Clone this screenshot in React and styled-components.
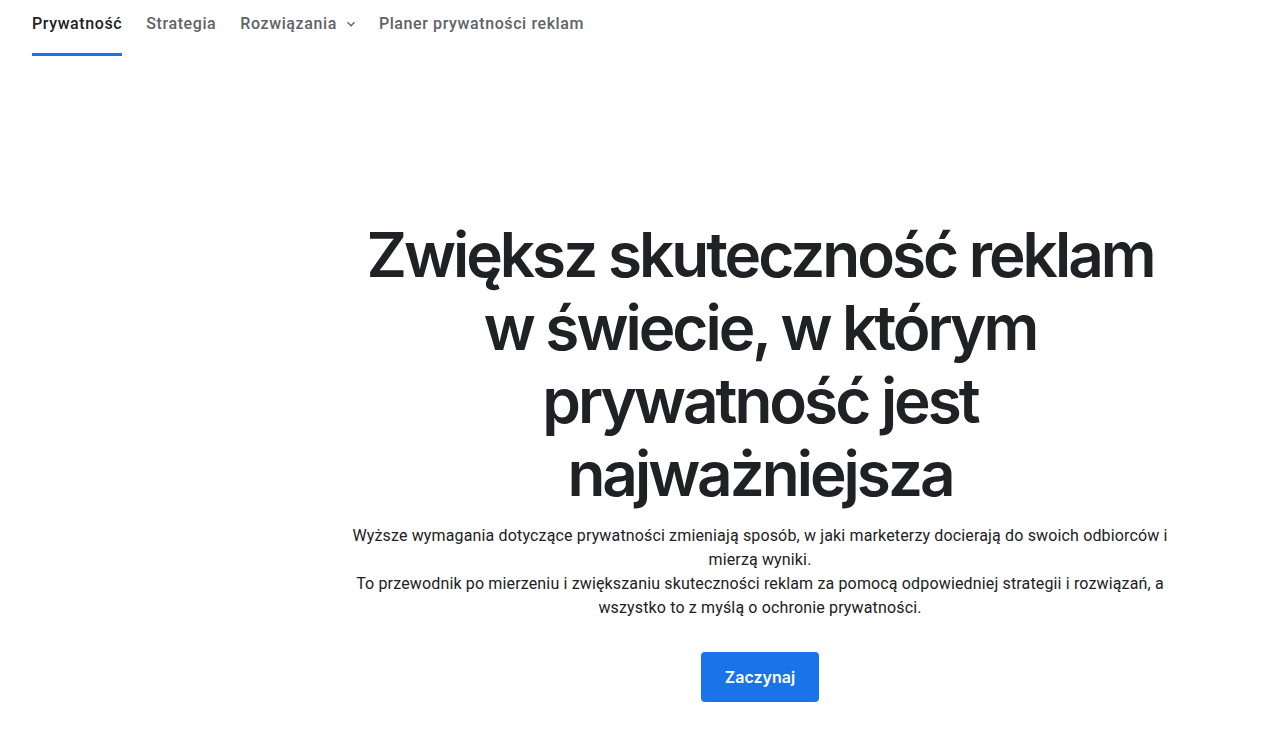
import React from "react";
import styled, { createGlobalStyle } from "styled-components";

const GlobalStyle = createGlobalStyle`
  html, body {
    margin: 0;
    padding: 0;
    background: #fff;
  }
  body {
    font-family: Roboto, "Liberation Sans", Arial, sans-serif;
    color: #202124;
    -webkit-font-smoothing: antialiased;
  }
`;

const navItems = [
  { label: "Prywatność", active: true },
  { label: "Strategia" },
  { label: "Rozwiązania", dropdown: true },
  { label: "Planer prywatności reklam" },
];

const headlineLines = [
  "Zwiększ skuteczność reklam",
  "w świecie, w którym",
  "prywatność jest",
  "najważniejsza",
];

function App() {
  return (
    <Page>
      <GlobalStyle />
      <Nav>
        {navItems.map((item) => (
          <NavItem key={item.label} active={item.active}>
            {item.label}
            {item.dropdown && (
              <Chevron viewBox="0 0 24 24" aria-hidden="true">
                <path d="M7.41 8.59 12 13.17l4.59-4.58L18 10l-6 6-6-6z" />
              </Chevron>
            )}
          </NavItem>
        ))}
      </Nav>
      <Hero>
        <HeroInner>
          <Headline>
            {headlineLines.map((line, i) => (
              <HeadlineLine key={i}>{line}</HeadlineLine>
            ))}
          </Headline>
          <Lead>
            Wyższe wymagania dotyczące prywatności zmieniają sposób, w jaki
            marketerzy docierają do swoich odbiorców i mierzą wyniki.
            <br />
            To przewodnik po mierzeniu i zwiększaniu skuteczności reklam za
            pomocą odpowiedniej strategii i rozwiązań, a wszystko to z myślą o
            ochronie prywatności.
          </Lead>
          <PrimaryButton>Zaczynaj</PrimaryButton>
        </HeroInner>
      </Hero>
    </Page>
  );
}

const Page = styled.div`
  min-height: 100vh;
  width: 100%;
`;

const Nav = styled.nav`
  display: flex;
  align-items: stretch;
  gap: 24px;
  height: 56px;
  padding: 0 32px;
`;

const NavItem = styled.a`
  display: flex;
  align-items: center;
  padding-bottom: 6px;
  box-sizing: border-box;
  font-size: 16px;
  font-weight: 500;
  letter-spacing: 0.6px;
  color: ${({ active }) => (active ? "#202124" : "#5f6368")};
  border-bottom: 3px solid ${({ active }) => (active ? "#1a73e8" : "transparent")};
  cursor: pointer;
`;

const Chevron = styled.svg`
  width: 16px;
  height: 16px;
  margin-left: 6px;
  margin-right: -4px;
  fill: #5f6368;
`;

const Hero = styled.section`
  display: flex;
  padding: 162px 0 0 340px;
`;

const HeroInner = styled.div`
  width: 840px;
  display: flex;
  flex-direction: column;
  align-items: center;
  text-align: center;
`;

const Headline = styled.h1`
  margin: 0;
  font-family: Inter, "Open Sans", sans-serif;
  font-weight: 600;
  font-size: 62px;
  line-height: 73px;
  letter-spacing: -3px;
  color: #202124;
`;

const HeadlineLine = styled.span`
  display: block;
  white-space: nowrap;
`;

const Lead = styled.p`
  margin: 14px 0 0;
  max-width: 840px;
  font-size: 16px;
  line-height: 24px;
  letter-spacing: 0.15px;
  color: #202124;
`;

const PrimaryButton = styled.button`
  margin-top: 32px;
  height: 50px;
  padding: 0 24px;
  border: none;
  border-radius: 4px;
  background: #1a73e8;
  color: #fff;
  font-family: Inter, "Open Sans", sans-serif;
  font-size: 16px;
  font-weight: 600;
  cursor: pointer;
`;

export default App;
